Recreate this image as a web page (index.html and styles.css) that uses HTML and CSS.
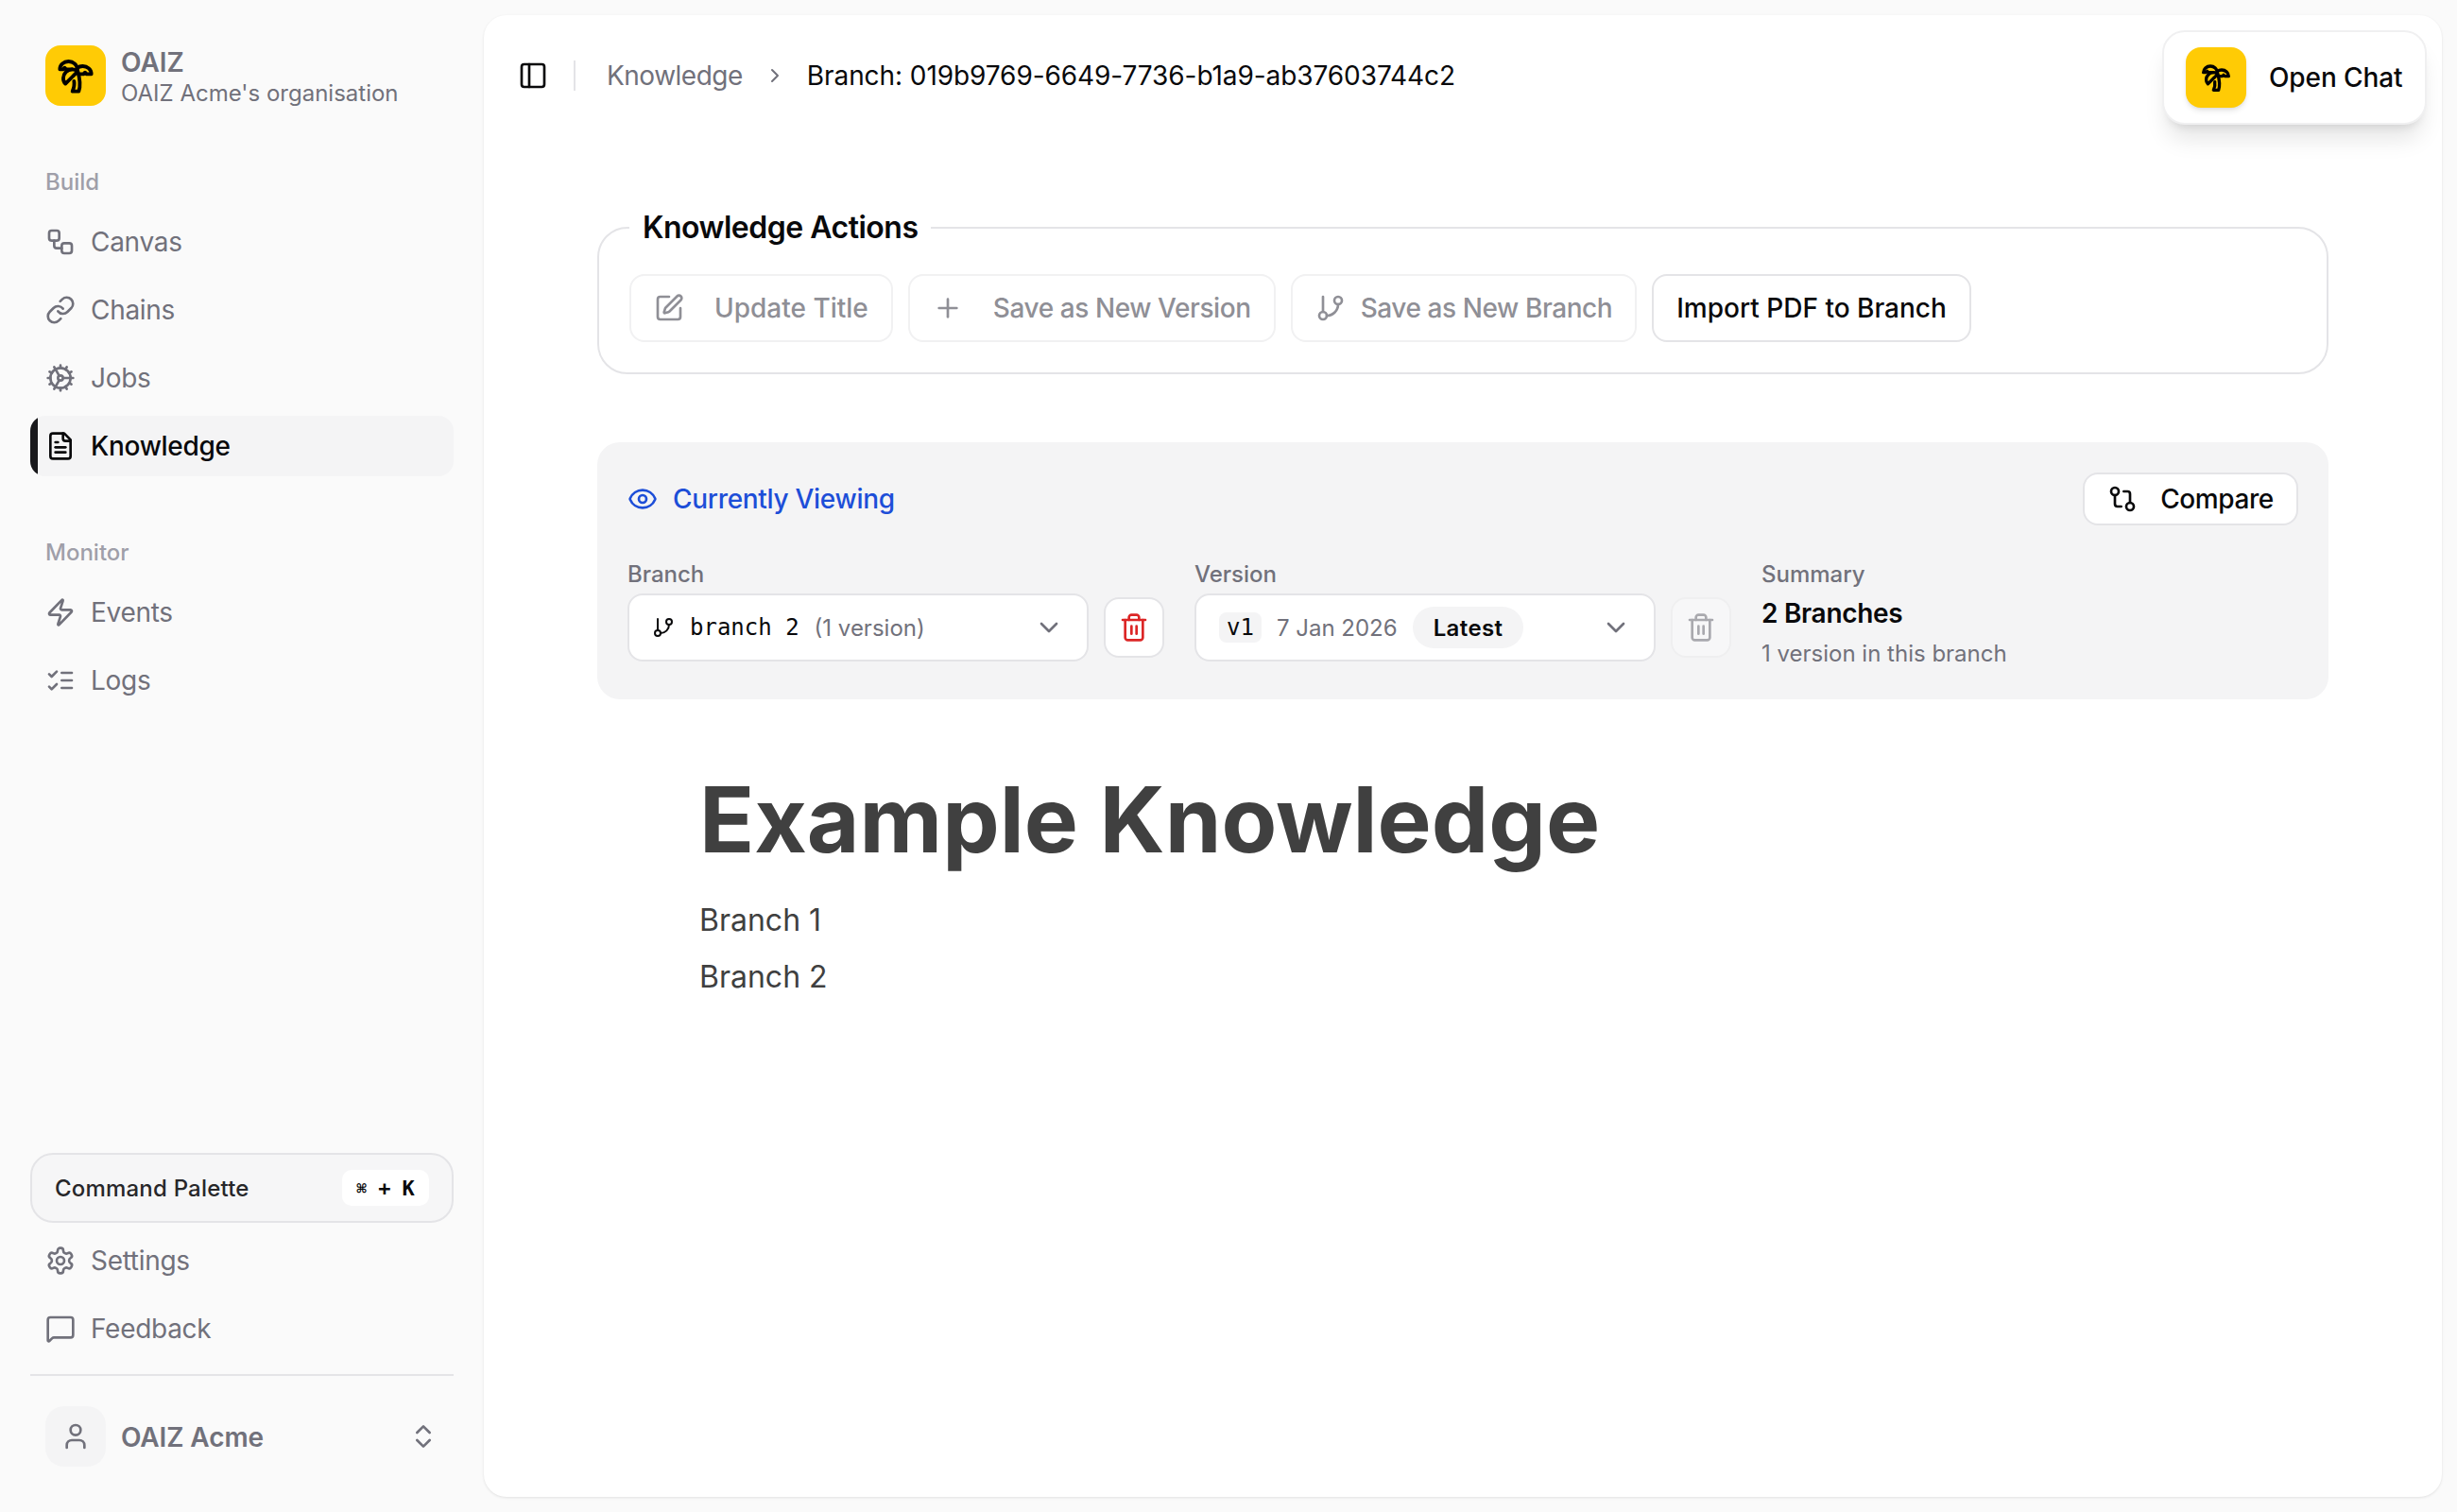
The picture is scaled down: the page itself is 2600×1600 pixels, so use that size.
FILE: index.html
```html
<!DOCTYPE html>
<html lang="en">
<head>
<meta charset="utf-8">
<title>Knowledge</title>
<link rel="stylesheet" href="styles.css">
</head>
<body>
<svg class="sprite" aria-hidden="true">
  <symbol id="i-palm" viewBox="0 0 24 24"><path d="M13 8c0-2.76-2.46-5-5.5-5S2 5.24 2 8h2l1-1 1 1h4"/><path d="M13 7.14A5.82 5.82 0 0 1 16.5 6c3.04 0 5.5 2.24 5.5 5h-3l-1-1-1 1h-3"/><path d="M5.89 9.71c-2.15 2.15-2.3 5.47-.35 7.43l4.24-4.25.7-.7.71-.71 2.12-2.12c-1.95-1.96-5.27-1.8-7.42.35"/><path d="M11 15.5c.5 2.5-.17 4.5-1 6.5h4c2-5.5-.5-12-1-14"/></symbol>
  <symbol id="i-workflow" viewBox="0 0 24 24"><rect width="8" height="8" x="3" y="3" rx="2"/><path d="M7 11v4a2 2 0 0 0 2 2h4"/><rect width="8" height="8" x="13" y="13" rx="2"/></symbol>
  <symbol id="i-link" viewBox="0 0 24 24"><path d="M10 13a5 5 0 0 0 7.54.54l3-3a5 5 0 0 0-7.07-7.07l-1.72 1.71"/><path d="M14 11a5 5 0 0 0-7.54-.54l-3 3a5 5 0 0 0 7.07 7.07l1.71-1.71"/></symbol>
  <symbol id="i-cog" viewBox="0 0 24 24"><path d="M12 20a8 8 0 1 0 0-16 8 8 0 0 0 0 16Z"/><path d="M12 14a2 2 0 1 0 0-4 2 2 0 0 0 0 4Z"/><path d="M12 2v2"/><path d="M12 22v-2"/><path d="m17 20.66-1-1.73"/><path d="M11 10.27 7 3.34"/><path d="m20.66 17-1.73-1"/><path d="m3.34 7 1.73 1"/><path d="M14 12h8"/><path d="M2 12h2"/><path d="m20.66 7-1.73 1"/><path d="m3.34 17 1.73-1"/><path d="m17 3.34-1 1.73"/><path d="m11 13.73-4 6.93"/></symbol>
  <symbol id="i-file" viewBox="0 0 24 24"><path d="M15 2H6a2 2 0 0 0-2 2v16a2 2 0 0 0 2 2h12a2 2 0 0 0 2-2V7Z"/><path d="M14 2v4a2 2 0 0 0 2 2h4"/><path d="M10 9H8"/><path d="M16 13H8"/><path d="M16 17H8"/></symbol>
  <symbol id="i-zap" viewBox="0 0 24 24"><path d="M4 14a1 1 0 0 1-.78-1.63l9.9-10.2a.5.5 0 0 1 .86.46l-1.92 6.02A1 1 0 0 0 13 10h7a1 1 0 0 1 .78 1.63l-9.9 10.2a.5.5 0 0 1-.86-.46l1.92-6.02A1 1 0 0 0 11 14z"/></symbol>
  <symbol id="i-logs" viewBox="0 0 24 24"><path d="m3 17 2 2 4-4"/><path d="m3 7 2 2 4-4"/><path d="M13 6h8"/><path d="M13 12h8"/><path d="M13 18h8"/></symbol>
  <symbol id="i-settings" viewBox="0 0 24 24"><path d="M12.22 2h-.44a2 2 0 0 0-2 2v.18a2 2 0 0 1-1 1.73l-.43.25a2 2 0 0 1-2 0l-.15-.08a2 2 0 0 0-2.73.73l-.22.38a2 2 0 0 0 .73 2.73l.15.1a2 2 0 0 1 1 1.72v.51a2 2 0 0 1-1 1.74l-.15.09a2 2 0 0 0-.73 2.73l.22.38a2 2 0 0 0 2.73.73l.15-.08a2 2 0 0 1 2 0l.43.25a2 2 0 0 1 1 1.73V20a2 2 0 0 0 2 2h.44a2 2 0 0 0 2-2v-.18a2 2 0 0 1 1-1.73l.43-.25a2 2 0 0 1 2 0l.15.08a2 2 0 0 0 2.73-.73l.22-.39a2 2 0 0 0-.73-2.73l-.15-.08a2 2 0 0 1-1-1.74v-.5a2 2 0 0 1 1-1.74l.15-.09a2 2 0 0 0 .73-2.73l-.22-.38a2 2 0 0 0-2.73-.73l-.15.08a2 2 0 0 1-2 0l-.43-.25a2 2 0 0 1-1-1.73V4a2 2 0 0 0-2-2z"/><circle cx="12" cy="12" r="3"/></symbol>
  <symbol id="i-message" viewBox="0 0 24 24"><path d="M22 17a2 2 0 0 1-2 2H6.828a2 2 0 0 0-1.414.586l-2.202 2.202A.71.71 0 0 1 2 21.286V5a2 2 0 0 1 2-2h16a2 2 0 0 1 2 2z"/></symbol>
  <symbol id="i-user" viewBox="0 0 24 24"><path d="M19 21v-2a4 4 0 0 0-4-4H9a4 4 0 0 0-4 4v2"/><circle cx="12" cy="7" r="4"/></symbol>
  <symbol id="i-updown" viewBox="0 0 24 24"><path d="m7 15 5 5 5-5"/><path d="m7 9 5-5 5 5"/></symbol>
  <symbol id="i-panel" viewBox="0 0 24 24"><rect width="18" height="18" x="3" y="3" rx="2"/><path d="M9 3v18"/></symbol>
  <symbol id="i-right" viewBox="0 0 24 24"><path d="m9 18 6-6-6-6"/></symbol>
  <symbol id="i-down" viewBox="0 0 24 24"><path d="m6 9 6 6 6-6"/></symbol>
  <symbol id="i-pen" viewBox="0 0 24 24"><path d="M12 3H5a2 2 0 0 0-2 2v14a2 2 0 0 0 2 2h14a2 2 0 0 0 2-2v-7"/><path d="M18.375 2.625a1 1 0 0 1 3 3l-9.013 9.014a2 2 0 0 1-.853.505l-2.873.84a.5.5 0 0 1-.62-.62l.84-2.873a2 2 0 0 1 .506-.852z"/></symbol>
  <symbol id="i-plus" viewBox="0 0 24 24"><path d="M5 12h14"/><path d="M12 5v14"/></symbol>
  <symbol id="i-branch" viewBox="0 0 24 24"><line x1="6" x2="6" y1="3" y2="15"/><circle cx="18" cy="6" r="3"/><circle cx="6" cy="18" r="3"/><path d="M18 9a9 9 0 0 1-9 9"/></symbol>
  <symbol id="i-compare" viewBox="0 0 24 24"><circle cx="18" cy="18" r="3"/><circle cx="6" cy="6" r="3"/><path d="M13 6h3a2 2 0 0 1 2 2v7"/><path d="M11 18H8a2 2 0 0 1-2-2V9"/></symbol>
  <symbol id="i-eye" viewBox="0 0 24 24"><path d="M2.062 12.348a1 1 0 0 1 0-.696 10.75 10.75 0 0 1 19.876 0 1 1 0 0 1 0 .696 10.75 10.75 0 0 1-19.876 0"/><circle cx="12" cy="12" r="3"/></symbol>
  <symbol id="i-trash" viewBox="0 0 24 24"><path d="M3 6h18"/><path d="M19 6v14c0 1-1 2-2 2H7c-1 0-2-1-2-2V6"/><path d="M8 6V4c0-1 1-2 2-2h4c1 0 2 1 2 2v2"/><line x1="10" x2="10" y1="11" y2="17"/><line x1="14" x2="14" y1="11" y2="17"/></symbol>
</svg>

<div class="app">
  <aside class="sidebar">
    <div class="brand">
      <span class="logo"><svg class="icon icon-palm"><use href="#i-palm"/></svg></span>
      <div class="brand-text">
        <div class="brand-name">OAIZ</div>
        <div class="brand-org">OAIZ Acme's organisation</div>
      </div>
    </div>
    <nav class="nav">
      <div class="nav-label">Build</div>
      <a class="nav-item"><svg class="icon"><use href="#i-workflow"/></svg>Canvas</a>
      <a class="nav-item"><svg class="icon"><use href="#i-link"/></svg>Chains</a>
      <a class="nav-item"><svg class="icon"><use href="#i-cog"/></svg>Jobs</a>
      <a class="nav-item nav-item-active"><svg class="icon"><use href="#i-file"/></svg>Knowledge</a>
      <div class="nav-label nav-label-spaced">Monitor</div>
      <a class="nav-item"><svg class="icon"><use href="#i-zap"/></svg>Events</a>
      <a class="nav-item"><svg class="icon"><use href="#i-logs"/></svg>Logs</a>
    </nav>
    <div class="sidebar-foot">
      <button class="palette"><span>Command Palette</span><kbd class="kbd"><span class="kbd-cmd">⌘</span><span>+</span><span>K</span></kbd></button>
      <a class="nav-item"><svg class="icon"><use href="#i-settings"/></svg>Settings</a>
      <a class="nav-item"><svg class="icon"><use href="#i-message"/></svg>Feedback</a>
      <div class="user-wrap">
        <div class="user">
          <span class="avatar"><svg class="icon"><use href="#i-user"/></svg></span>
          <span class="user-name">OAIZ Acme</span>
          <svg class="icon icon-updown"><use href="#i-updown"/></svg>
        </div>
      </div>
    </div>
  </aside>

  <main class="main">
    <header class="topbar">
      <svg class="icon icon-dark"><use href="#i-panel"/></svg>
      <span class="topbar-sep"></span>
      <span class="crumb">Knowledge</span>
      <svg class="icon icon-crumb"><use href="#i-right"/></svg>
      <span class="crumb-current">Branch: 019b9769-6649-7736-b1a9-ab37603744c2</span>
    </header>

    <button class="open-chat"><span class="logo logo-shadow"><svg class="icon icon-palm icon-palm-sm"><use href="#i-palm"/></svg></span><span class="open-chat-label">Open Chat</span></button>

    <div class="content">
      <fieldset class="actions">
        <legend class="actions-title">Knowledge Actions</legend>
        <div class="actions-row">
          <button class="btn btn-off btn-wide"><svg class="icon"><use href="#i-pen"/></svg>Update Title</button>
          <button class="btn btn-off btn-wide btn-tight"><svg class="icon"><use href="#i-plus"/></svg>Save as New Version</button>
          <button class="btn btn-off btn-tight"><svg class="icon"><use href="#i-branch"/></svg>Save as New Branch</button>
          <button class="btn">Import PDF to Branch</button>
        </div>
      </fieldset>

      <section class="viewing">
        <div class="viewing-head">
          <div class="viewing-title"><svg class="icon"><use href="#i-eye"/></svg>Currently Viewing</div>
          <button class="compare"><svg class="icon"><use href="#i-compare"/></svg>Compare</button>
        </div>
        <div class="viewing-grid">
          <div>
            <div class="field-label">Branch</div>
            <div class="field-row">
              <div class="select">
                <svg class="icon icon-sm icon-dark"><use href="#i-branch"/></svg>
                <span class="mono">branch 2</span>
                <span class="muted">(1 version)</span>
                <svg class="icon icon-chev"><use href="#i-down"/></svg>
              </div>
              <button class="del del-red"><svg class="icon"><use href="#i-trash"/></svg></button>
            </div>
          </div>
          <div>
            <div class="field-label">Version</div>
            <div class="field-row">
              <div class="select">
                <span class="tag mono">v1</span>
                <span class="muted">7 Jan 2026</span>
                <span class="pill">Latest</span>
                <svg class="icon icon-chev"><use href="#i-down"/></svg>
              </div>
              <button class="del del-off"><svg class="icon"><use href="#i-trash"/></svg></button>
            </div>
          </div>
          <div>
            <div class="field-label">Summary</div>
            <div class="summary-main">2 Branches</div>
            <div class="summary-sub">1 version in this branch</div>
          </div>
        </div>
      </section>

      <article class="prose">
        <h1>Example Knowledge</h1>
        <p>Branch 1</p>
        <p>Branch 2</p>
      </article>
    </div>
  </main>
</div>
</body>
</html>
```

FILE: styles.css
```css
* { box-sizing: border-box; }
html, body { margin: 0; height: 100%; }
body {
  font-family: Inter, "Noto Sans", sans-serif;
  background: #fafafa;
  color: #09090b;
  overflow: hidden;
}
button { font: inherit; color: inherit; cursor: pointer; }
.sprite { display: none; }

.icon {
  width: 32px;
  height: 32px;
  flex: none;
  fill: none;
  stroke: currentColor;
  stroke-width: 2;
  stroke-linecap: round;
  stroke-linejoin: round;
}

.app { display: flex; height: 1600px; }

/* Sidebar */
.sidebar {
  width: 512px;
  flex: none;
  padding: 32px;
  display: flex;
  flex-direction: column;
}
.brand { display: flex; align-items: center; gap: 16px; padding: 16px; height: 96px; }
.logo {
  width: 64px;
  height: 64px;
  flex: none;
  border-radius: 16px;
  background: #ffcb05;
  color: #000;
  display: flex;
  align-items: center;
  justify-content: center;
}
.icon-palm { width: 40px; height: 40px; stroke-width: 2.3; }
.icon-palm-sm { width: 32px; height: 32px; stroke-width: 2.5; }
.brand-text { display: flex; flex-direction: column; padding-top: 4px; }
.brand-name { font-size: 28px; line-height: 34px; font-weight: 600; color: #71717b; }
.brand-org { font-size: 24px; line-height: 32px; color: #71717b; }

.nav { flex: 1; display: flex; flex-direction: column; gap: 8px; margin-top: 48px; }
.nav-label {
  font-size: 24px;
  line-height: 34px;
  font-weight: 500;
  color: #9f9fa9;
  padding-left: 16px;
  margin-bottom: 6px;
}
.nav-label-spaced { margin-top: 56px; }
.nav-item {
  height: 64px;
  display: flex;
  align-items: center;
  gap: 16px;
  padding: 0 16px;
  border-radius: 16px;
  font-size: 28px;
  letter-spacing: -.3px;
  color: #71717b;
}
.nav-item-active {
  position: relative;
  overflow: hidden;
  background: #f4f4f5;
  color: #09090b;
  font-weight: 500;
}
.nav-item-active::before {
  content: "";
  position: absolute;
  left: 0;
  top: 0;
  bottom: 0;
  width: 8px;
  background: #18181b;
}

.sidebar-foot { display: flex; flex-direction: column; gap: 8px; }
.palette {
  height: 74px;
  display: flex;
  align-items: center;
  justify-content: space-between;
  padding: 0 24px;
  background: #f6f6f7;
  border: 2px solid #e4e4e7;
  border-radius: 24px;
  font-size: 24px;
  letter-spacing: .2px;
  font-weight: 500;
  color: #27272a;
}
.kbd {
  height: 38px;
  width: 92px;
  display: flex;
  align-items: center;
  justify-content: center;
  gap: 12px;
  background: #fff;
  border-radius: 10px;
  font-family: "DejaVu Sans Mono", monospace;
  font-size: 22px;
  letter-spacing: 0;
  font-weight: 700;
  color: #09090b;
}
.kbd-cmd { font-size: 18px; }
.user-wrap { margin-top: 8px; border-top: 2px solid #e4e4e7; padding-top: 16px; }
.user { display: flex; align-items: center; gap: 16px; padding: 16px; }
.avatar {
  width: 64px;
  height: 64px;
  flex: none;
  border-radius: 20px;
  background: #f4f4f5;
  color: #71717b;
  display: flex;
  align-items: center;
  justify-content: center;
}
.user-name { flex: 1; padding-top: 2px; font-size: 28px; letter-spacing: -.1px; font-weight: 600; color: #71717b; }
.icon-updown { color: #71717b; }

/* Main */
.main {
  flex: 1;
  margin: 16px 16px 16px 0;
  background: #fff;
  border-radius: 24px;
  box-shadow: 0 1px 3px rgba(0, 0, 0, .1);
  position: relative;
}
.topbar {
  height: 32px;
  margin: 48px 0 0 36px;
  display: flex;
  align-items: center;
  font-size: 28px;
}
.icon-dark { color: #09090b; }
.topbar-sep { width: 2px; height: 32px; background: #e4e4e7; margin: 0 33px 0 27px; }
.crumb { color: #71717b; letter-spacing: -.5px; }
.icon-crumb { width: 24px; height: 24px; color: #71717b; margin: 0 22px; }
.crumb-current { color: #09090b; letter-spacing: -.08px; }

.open-chat {
  position: absolute;
  top: 16px;
  right: 16px;
  width: 280px;
  height: 100px;
  display: flex;
  align-items: center;
  gap: 24px;
  padding: 0 23px;
  background: #fff;
  border: 2px solid #f0f0f1;
  border-radius: 24px;
  box-shadow: 0 20px 25px -5px rgba(0, 0, 0, .1), 0 8px 10px -6px rgba(0, 0, 0, .1);
  font-size: 28px;
  font-weight: 500;
}
.open-chat-label { white-space: nowrap; letter-spacing: -.1px; }
.logo-shadow { box-shadow: 0 4px 6px -1px rgba(0, 0, 0, .1), 0 2px 4px -2px rgba(0, 0, 0, .1); }

.content { padding: 0 120px; margin-top: 121px; }

.actions {
  margin: 0;
  padding: 0 32px 32px;
  border: 2px solid #e4e4e7;
  border-radius: 32px;
  min-width: 0;
}
.actions-title {
  padding: 0 14px;
  font-size: 32px;
  line-height: 48px;
  font-weight: 600;
  letter-spacing: -.5px;
}
.actions-row { display: flex; gap: 16px; padding-top: 25px; }
.btn {
  height: 72px;
  display: flex;
  align-items: center;
  gap: 16px;
  padding: 0 24px;
  background: #fff;
  border: 2px solid #e4e4e7;
  border-radius: 16px;
  font-size: 28px;
  font-weight: 500;
  white-space: nowrap;
}
.btn-wide { gap: 32px; }
.btn-tight { letter-spacing: -.42px; }
.btn-off { color: #8f8f96; border-color: #f1f1f2; }

.viewing {
  margin-top: 72px;
  padding: 32px;
  background: #f4f4f5;
  border-radius: 24px;
}
.viewing-head { display: flex; align-items: center; justify-content: space-between; height: 56px; margin-bottom: 32px; }
.viewing-title {
  display: flex;
  align-items: center;
  gap: 16px;
  color: #1d4ed8;
  font-size: 28px;
  font-weight: 500;
  letter-spacing: -.3px;
}
.compare {
  height: 56px;
  width: 228px;
  display: flex;
  align-items: center;
  justify-content: center;
  gap: 24px;
  background: #fff;
  border: 2px solid #e4e4e7;
  border-radius: 16px;
  font-size: 28px;
  font-weight: 500;
  letter-spacing: -.4px;
}
.viewing-grid { display: grid; grid-template-columns: repeat(3, 1fr); gap: 32px; }
.field-label { font-size: 24px; line-height: 40px; font-weight: 500; color: #71717b; }
.field-row { display: flex; align-items: center; gap: 16px; }
.select {
  flex: 1;
  height: 72px;
  display: flex;
  align-items: center;
  gap: 16px;
  padding: 0 24px;
  background: #fff;
  border: 2px solid #e4e4e7;
  border-radius: 16px;
}
.select .icon-sm { width: 24px; height: 24px; }
.mono { font-family: "DejaVu Sans Mono", monospace; font-size: 24px; color: #09090b; }
.muted { font-size: 24px; color: #71717b; }
.icon-chev { margin-left: auto; color: #71717b; }
.tag { padding: 2px 8px; background: #f4f4f5; border-radius: 8px; }
.pill {
  height: 44px;
  display: flex;
  align-items: center;
  padding: 0 22px;
  background: #f4f4f5;
  border-radius: 22px;
  font-size: 24px;
  letter-spacing: .4px;
  font-weight: 600;
}
.del {
  width: 64px;
  height: 64px;
  flex: none;
  padding: 0;
  display: flex;
  align-items: center;
  justify-content: center;
  background: #fff;
  border: 2px solid #e4e4e7;
  border-radius: 16px;
}
.del-red { color: #dc2626; }
.del-off { color: #a9a9ae; background: #f7f7f8; border-color: #efeff0; }
.summary-main { font-size: 28px; line-height: 42px; font-weight: 600; letter-spacing: -.3px; }
.summary-sub { font-size: 24px; line-height: 32px; margin-top: 6px; color: #71717b; }

.prose { padding: 79px 0 0 108px; color: #404040; }
.prose h1 { margin: 0 0 35px; font-size: 96px; line-height: 96px; font-weight: 700; }
.prose p { margin: 0 0 12px; font-size: 32px; line-height: 48px; }
```
